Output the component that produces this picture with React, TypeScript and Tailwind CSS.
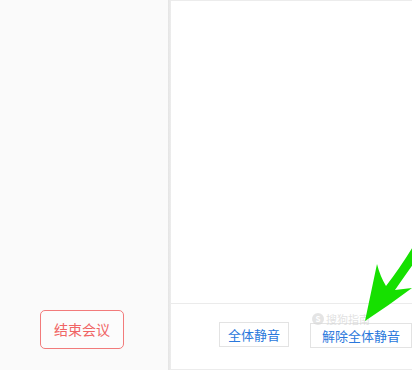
export default function App() {
  return (
    <div
      className="flex h-[370px] w-[412px] overflow-hidden bg-white"
      style={{ fontFamily: '"Noto Sans CJK SC", "Noto Sans", sans-serif' }}
    >
      {/* left side */}
      <div className="flex w-[168px] flex-col justify-end bg-[#fafafa] pb-[21px]">
        <div className="flex justify-center pr-[4px]">
          <button className="h-[39px] w-[84px] rounded-[5px] border border-[#f27b7b] bg-white/40 text-[14px] text-[#f06464]">
            结束会议
          </button>
        </div>
      </div>
      <div className="w-[3px] bg-gradient-to-r from-[#e4e4e4] to-[#ededed]" />

      {/* right side */}
      <div className="relative flex flex-1 flex-col border-t border-b border-[#ececec]">
        <div className="flex-1" />
        <div className="flex h-[66px] gap-[21px] border-t border-[#ebebeb] pl-[48px] pt-[18px]">
          <button className="h-[25px] w-[70px] border border-[#e3e3e3] bg-white text-[13px] leading-none text-[#2a78dc]">
            全体静音
          </button>
          <div className="relative">
            <span className="absolute left-[2px] top-[-9px] flex items-center gap-[2px] text-[11px] leading-none text-[#d4d4d4]/70">
              <span className="flex h-[12px] w-[12px] items-center justify-center rounded-full bg-[#d8d8d8]/70 text-[8px] font-bold text-white">
                S
              </span>
              搜狗指南
            </span>
            <button className="h-[25px] w-[102px] border border-[#e3e3e3] bg-white text-[13px] leading-none text-[#2a78dc]">
              解除全体静音
            </button>
          </div>
        </div>

        {/* green arrow */}
        <svg
          className="absolute left-[-171px] top-[-1px]"
          width="412"
          height="370"
          viewBox="0 0 412 370"
        >
          <path
            d="M365 321 L377 264 Q380 276 386 286 Q400 268 414 245 L414 263 Q404 277 395 290 Q403 289 412 288 Q388 306 365 321 Z"
            fill="#16e000"
          />
        </svg>
      </div>
    </div>
  );
}
